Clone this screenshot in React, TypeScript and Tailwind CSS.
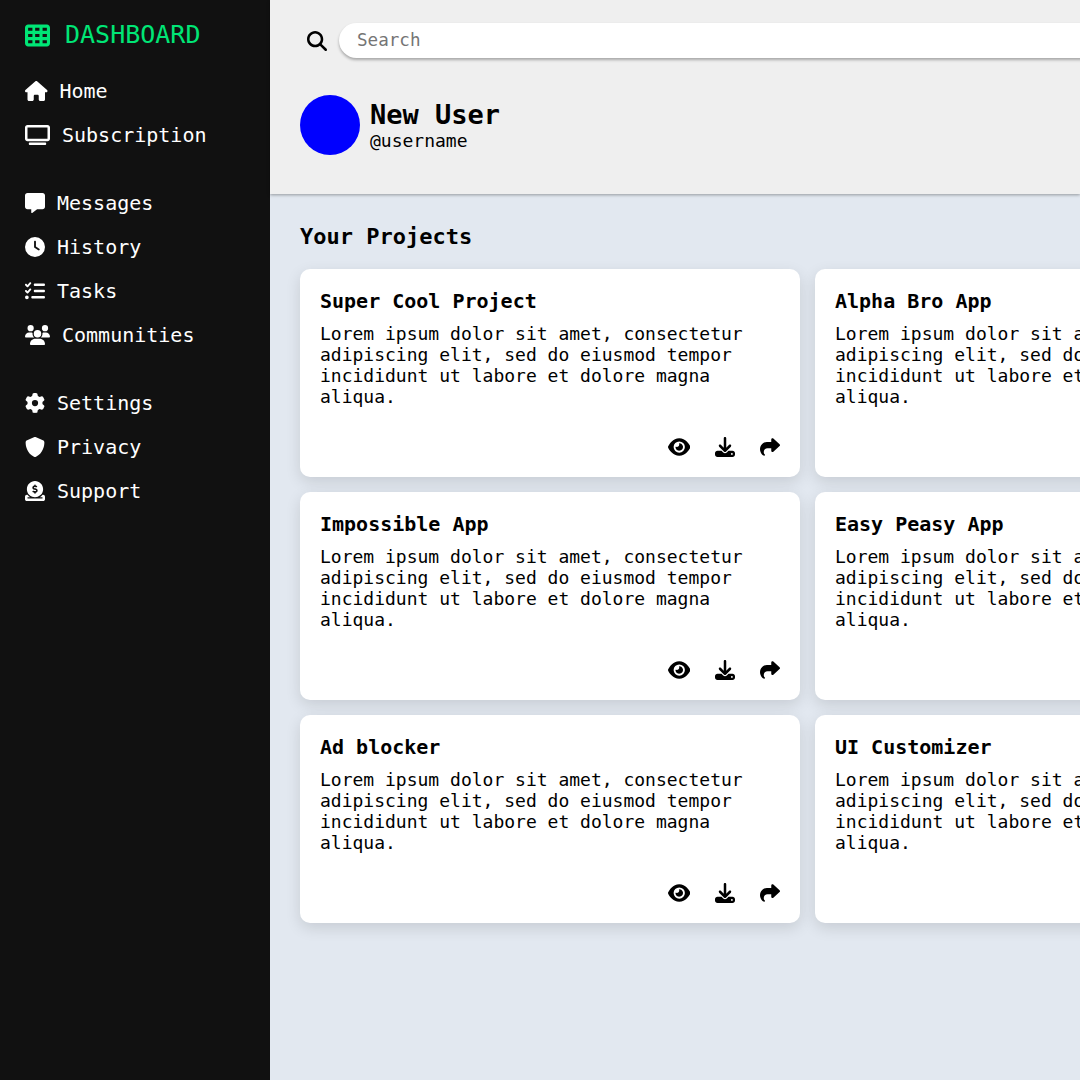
import React from 'react'
import {
  FaCircleDollarToSlot,
  FaClock,
  FaDownload,
  FaEye,
  FaGear,
  FaHouse,
  FaListCheck,
  FaMagnifyingGlass,
  FaMessage,
  FaShare,
  FaShield,
  FaTableCells,
  FaTv,
  FaUsers,
} from 'react-icons/fa6'

const navGroups = [
  [
    { label: 'Home', icon: FaHouse, size: 'w-[22.5px]' },
    { label: 'Subscription', icon: FaTv, size: 'w-[25px]' },
  ],
  [
    { label: 'Messages', icon: FaMessage, size: 'w-[20px]' },
    { label: 'History', icon: FaClock, size: 'w-[20px]' },
    { label: 'Tasks', icon: FaListCheck, size: 'w-[20px]' },
    { label: 'Communities', icon: FaUsers, size: 'w-[25px]' },
  ],
  [
    { label: 'Settings', icon: FaGear, size: 'w-[20px]' },
    { label: 'Privacy', icon: FaShield, size: 'w-[20px]' },
    { label: 'Support', icon: FaCircleDollarToSlot, size: 'w-[20px]' },
  ],
]

const projects = ['Super Cool Project', 'Alpha Bro App', 'Impossible App', 'Easy Peasy App', 'Ad blocker', 'UI Customizer']

const Sidebar = () => (
  <aside className="w-[270px] shrink-0 bg-[#111111] pl-[25px] pt-[20px] text-white">
    <div className="flex h-[30px] items-center gap-[15px] text-[25px] text-[#00e676]">
      <FaTableCells className="h-[25px] w-[25px] shrink-0" />
      <span>DASHBOARD</span>
    </div>
    <nav className="mt-[19px] flex flex-col gap-[24px]">
      {navGroups.map((group, i) => (
        <ul key={i} className="flex flex-col">
          {group.map((item) => (
            <li key={item.label} className="flex h-[44px] items-center gap-[12px] text-[20px]">
              <item.icon className={`h-[20px] shrink-0 ${item.size}`} />
              <span>{item.label}</span>
            </li>
          ))}
        </ul>
      ))}
    </nav>
  </aside>
)

const Header = () => (
  <header className="relative z-10 h-[194px] shrink-0 bg-[#efefef] shadow-[0_1px_3px_rgba(0,0,0,0.35)]">
    <div className="flex items-center gap-[12px] pl-[37px] pt-[23px]">
      <FaMagnifyingGlass className="h-[20px] w-[20px] shrink-0 text-black" />
      <div className="flex h-[35px] w-[900px] shrink-0 items-center rounded-full bg-white pl-[18px] text-[17.6px] text-[#757575] shadow-[0_2px_3px_rgba(0,0,0,0.3)]">
        Search
      </div>
    </div>
    <div className="mt-[37px] flex items-center gap-[10px] pl-[30px]">
      <div className="h-[60px] w-[60px] rounded-full bg-[#0000ff]" />
      <div className="flex flex-col">
        <span className="text-[27px] leading-[32px] font-bold text-black">New User</span>
        <span className="text-[18px] leading-[20px] text-black">@username</span>
      </div>
    </div>
  </header>
)

const ProjectCard = ({ title }: { title: string }) => (
  <div className="flex h-[208px] w-[500px] flex-col rounded-[10px] bg-white px-[20px] pt-[20px] shadow-[0_5px_15px_rgba(0,0,0,0.12)]">
    <h3 className="text-[20px] leading-[24px] font-bold text-black">{title}</h3>
    <p className="mt-[10px] text-[18px] leading-[21px] text-black">
      Lorem ipsum dolor sit amet, consectetur adipiscing elit, sed do eiusmod tempor incididunt ut labore et dolore
      magna aliqua.
    </p>
    <div className="mt-[30px] flex items-center justify-end gap-[25px] text-black">
      <FaEye className="h-[20px] w-[22.5px] shrink-0" />
      <FaDownload className="h-[20px] w-[20px] shrink-0" />
      <FaShare className="h-[20px] w-[20px] shrink-0" />
    </div>
  </div>
)

export default function App() {
  return (
    <div
      className="flex h-screen w-screen overflow-clip bg-[#e2e8f0]"
      style={{ fontFamily: '"DejaVu Sans Mono", monospace' }}
    >
      <Sidebar />
      <div className="flex min-w-0 flex-1 flex-col">
        <Header />
        <main className="px-[30px] pt-[30px]">
          <h2 className="text-[22px] leading-[26px] font-bold text-black">Your Projects</h2>
          <div className="mt-[19px] grid w-[1015px] grid-cols-[500px_500px] gap-[15px]">
            {projects.map((p) => (
              <ProjectCard key={p} title={p} />
            ))}
          </div>
        </main>
      </div>
    </div>
  )
}
